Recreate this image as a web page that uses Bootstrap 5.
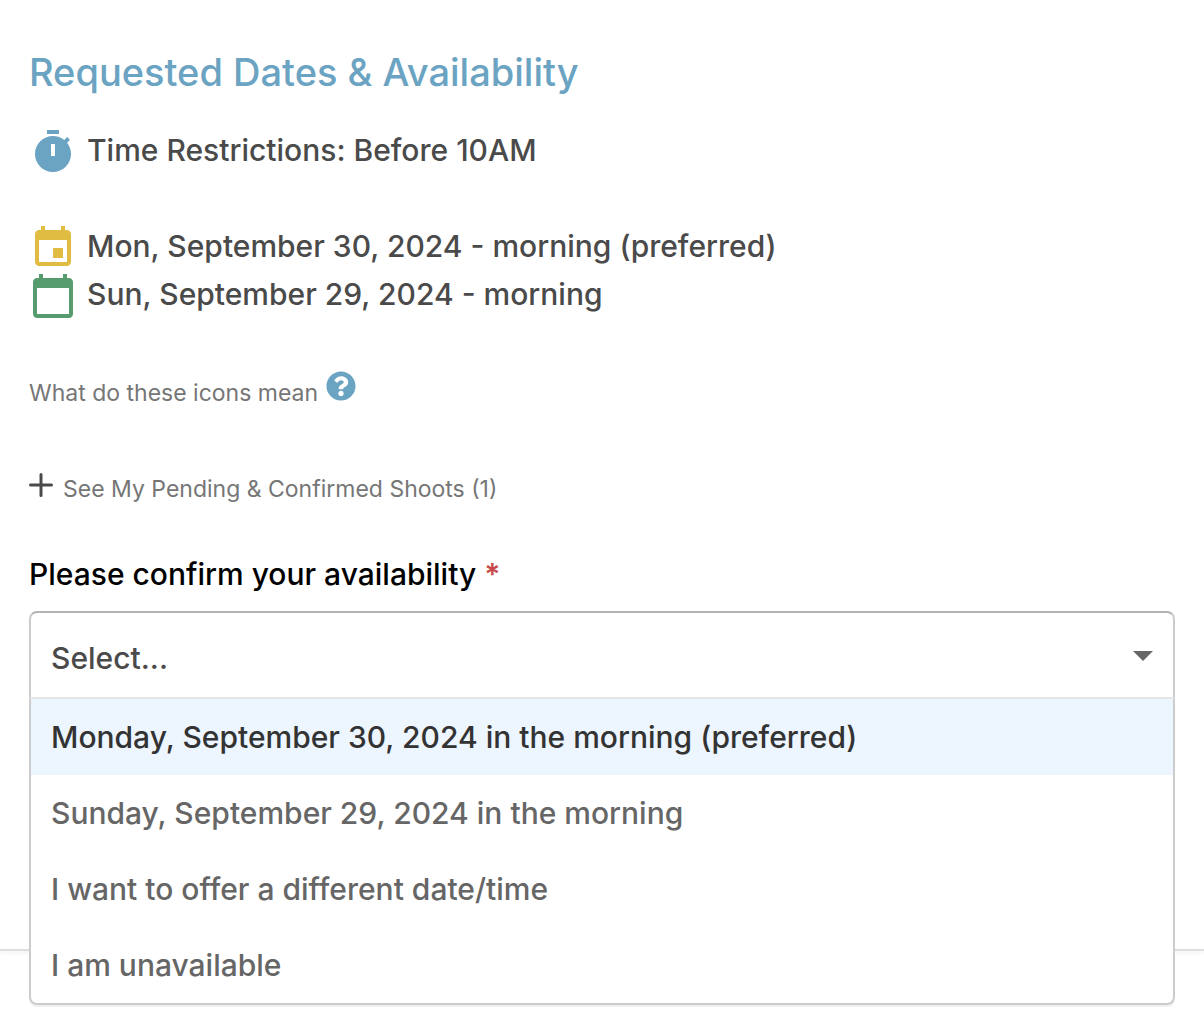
<!DOCTYPE html>
<html lang="en">
<head>
<meta charset="utf-8">
<meta name="viewport" content="width=device-width, initial-scale=1">
<title>Requested Dates &amp; Availability</title>
<link rel="stylesheet" href="https://cdn.jsdelivr.net/npm/bootstrap@5.3.0/dist/css/bootstrap.min.css">
<style>
  body { min-height: 100vh; font-family: Inter, "Open Sans", sans-serif; font-weight: 500; font-size: 30px; line-height: 48px; color: #4a4a4a; background: #fff; }
  .request-panel { padding: 48px 29px 250px; border-bottom: 2px solid #dedede; box-shadow: 0 2px 4px rgba(0,0,0,.05); }
  .panel-title { font-size: 38px; font-weight: 500; line-height: 48px; color: #6ba3c2; margin-bottom: 30px; }
  .slot-row { gap: 10px; }
  .slot-icon { width: 48px; height: 48px; flex: none; margin-top: 2px; margin-bottom: -2px; }
  .tone-blue { color: #6ba3c2; }
  .tone-gold { color: #e1bc42; }
  .tone-green { color: #579c6e; }
  .slot-list { margin-bottom: 51px; }
  .small-line { font-size: 23px; line-height: 48px; color: #767676; }
  .btn-plain { padding: 0; border: 0; background: none; }
  .hint-btn { padding-top: 2px; }
  .pending-btn { gap: 10px; }
  .plus-icon { margin-top: 8px; }
  .field-label { color: #000; margin-top: 37px; margin-bottom: 13px; }
  .req-star { color: #c94a4a; font-weight: 600; }
  .avail-select { height: 88px; padding: 5px 60px 0 20px; font: inherit; line-height: 48px; color: #4a4a4a; border: 2px solid #ccc; border-top-color: #b3b3b3; border-bottom-color: #e6e6e6; border-radius: 8px 8px 0 0;
    background-image: url("data:image/svg+xml,%3Csvg xmlns='http://www.w3.org/2000/svg' viewBox='0 0 20 10'%3E%3Cpath d='M0 0h20L10 10z' fill='%23666'/%3E%3C/svg%3E"); background-size: 20px 10px; background-position: right 20px top 38px; }
  .avail-menu { top: 100%; border: 2px solid #ccc; border-top: 0; border-radius: 0 0 8px 8px; background: #fff; box-shadow: 0 2px 0 rgba(0,0,0,.06); overflow: hidden; }
  .avail-menu .list-group-item { border: 0; padding: 14px 20px; font-weight: 500; color: #666; background: #fff; }
  .avail-menu .list-group-item.is-focused { background: #edf5ff; color: #333; }
</style>
<script src="https://cdn.jsdelivr.net/npm/bootstrap@5.3.0/dist/js/bootstrap.bundle.min.js"></script>
</head>
<body>
<main class="request-panel">
  <h1 class="panel-title">Requested Dates &amp; Availability</h1>

  <div class="slot-row d-flex align-items-start">
    <svg class="slot-icon tone-blue" viewBox="0 0 24 24" fill="currentColor" fill-rule="evenodd" aria-hidden="true"><path d="M15 1H9v2h6V1z"/><path d="M11 14h2V8h-2v6zm8.030-6.610 1.420-1.420c-.43-.51-.9-.99-1.410-1.410l-1.420 1.420C16.070 4.740 14.120 4 12 4c-4.970 0-9 4.030-9 9s4.020 9 9 9 9-4.030 9-9c0-2.120-.74-4.070-1.970-5.610z"/></svg>
    <span>Time Restrictions: Before 10AM</span>
  </div>

  <ul class="slot-list list-unstyled mt-5">
    <li class="slot-row d-flex align-items-start">
      <svg class="slot-icon tone-gold" viewBox="0 0 24 24" fill="currentColor" aria-hidden="true"><path d="M17 12h-5v5h5v-5zM16 1v2H8V1H6v2H5c-1.11 0-1.99.9-1.99 2L3 19c0 1.1.89 2 2 2h14c1.1 0 2-.9 2-2V5c0-1.1-.9-2-2-2h-1V1h-2zm3 18H5V8h14v11z"/></svg>
      <span>Mon, September 30, 2024 - morning (preferred)</span>
    </li>
    <li class="slot-row d-flex align-items-start">
      <svg class="slot-icon tone-green" viewBox="0 0 24 24" fill="currentColor" aria-hidden="true"><path d="M20 3h-1V1h-2v2H7V1H5v2H4c-1.1 0-2 .9-2 2v16c0 1.1.9 2 2 2h16c1.1 0 2-.9 2-2V5c0-1.1-.9-2-2-2zm0 18H4V8h16v13z"/></svg>
      <span>Sun, September 29, 2024 - morning</span>
    </li>
  </ul>

  <div class="small-line d-flex align-items-start gap-2">
    <span class="fw-normal">What do these icons mean</span>
    <button type="button" class="btn-plain hint-btn d-flex align-items-start tone-blue" aria-label="Help">
      <svg width="30" height="30" viewBox="0 0 512 512" fill="currentColor" aria-hidden="true"><path d="M504 256c0 136.997-111.043 248-248 248S8 392.997 8 256C8 119.083 119.043 8 256 8s248 111.083 248 248zM262.655 90c-54.497 0-89.255 22.957-116.549 63.758-3.536 5.286-2.353 12.415 2.715 16.258l34.699 26.310c5.205 3.947 12.621 3.008 16.665-2.122 17.864-22.658 30.113-35.797 57.303-35.797 20.429 0 45.698 13.148 45.698 32.958 0 14.976-12.363 22.667-32.534 33.976C247.128 238.528 216 254.941 216 296v4c0 6.627 5.373 12 12 12h56c6.627 0 12-5.373 12-12v-1.333c0-28.462 83.186-29.647 83.186-106.667 0-58.002-60.165-102-116.531-102zM256 338c-25.365 0-46 20.635-46 46 0 25.364 20.635 46 46 46s46-20.636 46-46c0-25.365-20.635-46-46-46z"/></svg>
    </button>
  </div>

  <button type="button" class="btn-plain small-line pending-btn d-flex align-items-start fw-normal mt-5" aria-expanded="false">
    <svg class="plus-icon" width="24" height="24" viewBox="0 0 24 24" fill="none" stroke="#4a4a4a" stroke-width="3" stroke-linecap="round" aria-hidden="true"><path d="M12 1.500v21M1.500 12h21"/></svg>
    <span>See My Pending &amp; Confirmed Shoots (1)</span>
  </button>

  <label class="field-label d-block" for="availability">Please confirm your availability <span class="req-star">*</span></label>
  <div class="position-relative">
    <select id="availability" class="form-select avail-select">
      <option selected>Select...</option>
    </select>
    <div class="avail-menu list-group position-absolute w-100" role="listbox" aria-label="Availability">
      <button type="button" role="option" class="list-group-item list-group-item-action is-focused">Monday, September 30, 2024 in the morning (preferred)</button>
      <button type="button" role="option" class="list-group-item list-group-item-action">Sunday, September 29, 2024 in the morning</button>
      <button type="button" role="option" class="list-group-item list-group-item-action">I want to offer a different date/time</button>
      <button type="button" role="option" class="list-group-item list-group-item-action">I am unavailable</button>
    </div>
  </div>
</main>
</body>
</html>
